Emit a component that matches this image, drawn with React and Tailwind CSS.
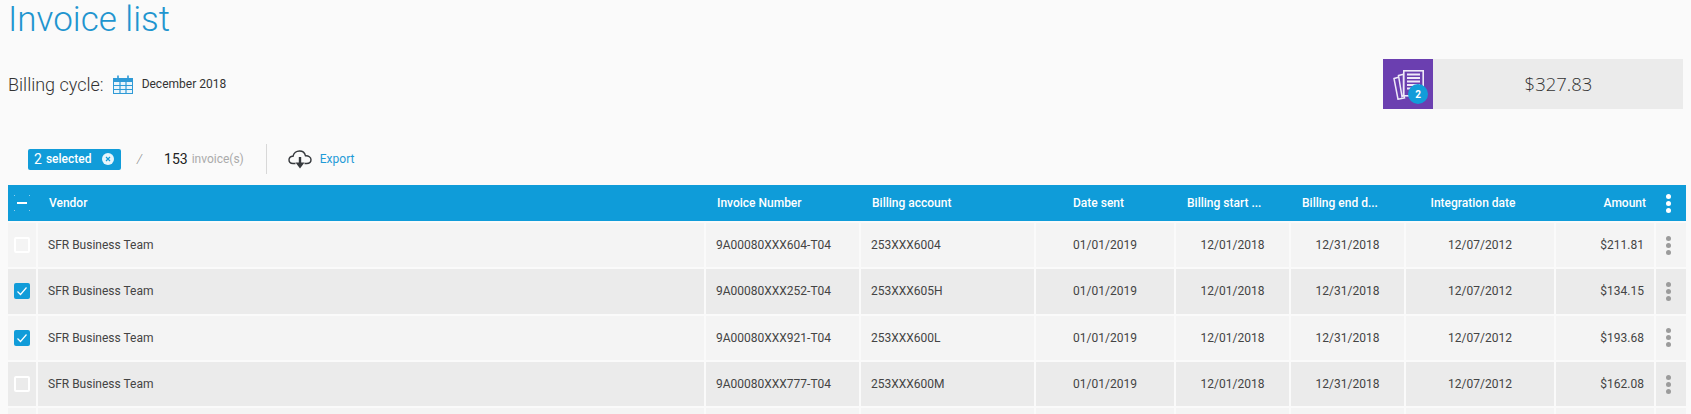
import { Fragment } from 'react'

const COLS = 'grid grid-cols-[28px_666px_153px_173px_138px_113px_113px_148px_98px_30px] gap-x-[2px]'

const ROWS = [
  { checked: false, invoice: '9A00080XXX604-T04', account: '253XXX6004', amount: '$211.81' },
  { checked: true, invoice: '9A00080XXX252-T04', account: '253XXX605H', amount: '$134.15' },
  { checked: true, invoice: '9A00080XXX921-T04', account: '253XXX600L', amount: '$193.68' },
  { checked: false, invoice: '9A00080XXX777-T04', account: '253XXX600M', amount: '$162.08' },
]

function CalendarIcon() {
  return (
    <svg width="20" height="19" viewBox="0 0 20 19" className="block shrink-0">
      <rect x="0.500" y="3.500" width="19" height="15" fill="#eaf5fb" stroke="#2f9ad6" />
      <path d="M1 3h18v4H1z" fill="#2f9ad6" />
      <path d="M5 0.500v4M15 0.500v4" stroke="#2f9ad6" strokeWidth="1.600" />
      <path d="M1 10.500h18M1 14.500h18M7 7v11M13 7v11" stroke="#2f9ad6" strokeWidth="1.200" />
    </svg>
  )
}

function CloudIcon() {
  return (
    <svg width="24" height="19" viewBox="0 0 24 19" fill="none" className="block shrink-0">
      <path
        d="M7.500 13.500H5C2.500 13.500 1 11.900 1 9.800 1 7.600 2.800 6.100 5 6.300 5.600 3 8.500 1 11.500 1c3 0 5.400 2 6 4.800 3-.2 5.500 1.500 5.500 4 0 2.300-1.800 3.700-4.300 3.700H16.500"
        stroke="#36393d"
        strokeWidth="1.400"
      />
      <path d="M12 7v7" stroke="#36393d" strokeWidth="2.400" />
      <path d="M7.500 12.500h9L12 18.500z" fill="#36393d" />
    </svg>
  )
}

function DocsIcon() {
  return (
    <svg width="31" height="30" viewBox="0 0 31 30" fill="none" className="block">
      <path d="M1 8.500l5.500-1.500 5 21-6.500 1.200z" fill="#6b3fb0" stroke="#efe9f8" strokeWidth="1.500" />
      <path d="M5.500 5.500l5-1.200v21l-1.500 1.200z" fill="#6b3fb0" stroke="#efe9f8" strokeWidth="1.500" />
      <rect x="10.800" y="0.800" width="19.400" height="25" fill="#6b3fb0" stroke="#efe9f8" strokeWidth="1.600" />
      <path d="M14 4.500h13M14 8h13M14 11.500h13M14 15h13M14 18.500h8" stroke="#efe9f8" strokeWidth="1.800" />
    </svg>
  )
}

function Dots({ light }) {
  const dot = light ? 'w-[5px] h-[5px] rounded-full bg-white' : 'w-[5px] h-[5px] rounded-full bg-[#9b9b9b]'
  return (
    <div className="flex flex-col items-center gap-[2px] mr-[6px]">
      <span className={dot} />
      <span className={dot} />
      <span className={dot} />
    </div>
  )
}

function Checkbox({ checked }) {
  if (checked) {
    return (
      <span className="flex w-4 h-4 items-center justify-center rounded-[2px] bg-[#119cd9]">
        <svg width="12" height="10" viewBox="0 0 12 10" fill="none">
          <path d="M1.500 5.500L4.500 8.500L10.500 1.500" stroke="#fff" strokeWidth="1.200" />
        </svg>
      </span>
    )
  }
  return <span className="block w-4 h-4 rounded-[2px] border-2 border-white" />
}

// header checkbox: minus with four faint corner dots
function HeaderCheckbox() {
  const corner = 'absolute w-px h-px bg-[#8fd0ee]'
  return (
    <span className="relative flex w-4 h-4 items-center justify-center">
      <span className="block w-[10px] h-[2px] bg-white" />
      <span className={`${corner} left-0 top-0`} />
      <span className={`${corner} right-0 top-0`} />
      <span className={`${corner} left-0 bottom-0`} />
      <span className={`${corner} right-0 bottom-0`} />
    </span>
  )
}

export default function App() {
  return (
    <div className="h-[414px] overflow-hidden bg-[#fafafa] font-['Roboto',sans-serif]">
      <h1 className="h-[39px] pl-[8px] text-[35px] leading-[39px] font-light text-[#1f95cf]">Invoice list</h1>

      <div className="h-[50px] mt-[20px] pl-[8px] pr-[8px] flex items-center justify-between">
        <div className="flex items-center">
          <span className="text-[18px] font-light text-[#333]">Billing cycle:</span>
          <span className="ml-[9px]"><CalendarIcon /></span>
          <span className="ml-[9px] text-[12px] text-[#333]">December 2018</span>
        </div>
        <div className="flex w-[300px] h-[50px] bg-[#ebebeb]">
          <div className="relative w-[50px] h-[50px] bg-[#6b3fb0] pl-[10px] pt-[11px]">
            <DocsIcon />
            <span className="absolute left-[25px] top-[25px] w-5 h-5 rounded-full bg-[#119cd9] text-white text-[10px] font-bold flex items-center justify-center">2</span>
          </div>
          <div className="flex-1 flex items-center justify-center pl-[1px] font-['Open_Sans',sans-serif] font-light text-[18.500px] text-[#333]">$327.83</div>
        </div>
      </div>

      <div className="h-[30px] mt-[35px] pl-[28px] flex items-center">
        <span className="flex items-center w-[93px] h-[21px] pl-[6px] rounded-[2px] bg-[#119cd9] text-white">
          <span className="text-[14px]">2</span>
          <span className="ml-[4px] text-[12px] font-medium">selected</span>
          <span className="ml-[11px] w-3 h-3 rounded-full bg-[#e8f5fb] flex items-center justify-center">
            <svg width="6" height="6" viewBox="0 0 6 6"><path d="M1 1l4 4M5 1l-4 4" stroke="#119cd9" strokeWidth="1.200" /></svg>
          </span>
        </span>
        <span className="ml-[16px] text-[13px] italic font-light text-[#888]">/</span>
        <span className="ml-[22px] text-[14px] text-[#222]">153</span>
        <span className="ml-[4px] text-[12px] text-[#aaa]">invoice(s)</span>
        <span className="ml-[22px] w-px h-[30px] bg-[#d8d8d8]" />
        <span className="ml-[21px]"><CloudIcon /></span>
        <span className="ml-[8px] text-[12px] text-[#1f9bd7]">Export</span>
      </div>

      <div className="ml-[8px] w-[1678px] mt-[11px]">
        <div className={`${COLS} h-[36px] mb-[2px] items-center bg-[#0f9cd9] text-white text-[12px] font-medium`}>
          <span className="flex justify-center"><HeaderCheckbox /></span>
          <span className="pl-[11px]">Vendor</span>
          <span className="pl-[11px]">Invoice Number</span>
          <span className="pl-[11px]">Billing account</span>
          <span className="text-center pr-[13px]">Date sent</span>
          <span className="pl-[11px]">Billing start ...</span>
          <span className="pl-[11px]">Billing end d...</span>
          <span className="text-center pr-[14px]">Integration date</span>
          <span className="pr-[8px] text-right">Amount</span>
          <span className="flex justify-center"><Dots light /></span>
        </div>

        <div className="flex flex-col gap-y-[2px]">
          {[...ROWS, null].map((r, i) => {
            const bg = i % 2 === 0 ? 'bg-[#f4f4f4]' : 'bg-[#ebebeb]'
            const cell = `${bg} h-[44.330px] flex items-center text-[12px] text-[#444]`
            return (
              <div key={i} className={COLS}>
                {r ? (
                  <Fragment>
                    <div className={`${cell} justify-center`}><Checkbox checked={r.checked} /></div>
                    <div className={`${cell} pl-[10px]`}>SFR Business Team</div>
                    <div className={`${cell} pl-[10px]`}>{r.invoice}</div>
                    <div className={`${cell} pl-[10px]`}>{r.account}</div>
                    <div className={`${cell} justify-center`}>01/01/2019</div>
                    <div className={`${cell} justify-center`}>12/01/2018</div>
                    <div className={`${cell} justify-center`}>12/31/2018</div>
                    <div className={`${cell} justify-center`}>12/07/2012</div>
                    <div className={`${cell} justify-end pr-[10px]`}>{r.amount}</div>
                    <div className={`${cell} justify-center`}><Dots /></div>
                  </Fragment>
                ) : (
                  Array.from({ length: 10 }, (_, c) => <div key={c} className={cell} />)
                )}
              </div>
            )
          })}
        </div>
      </div>
    </div>
  )
}
